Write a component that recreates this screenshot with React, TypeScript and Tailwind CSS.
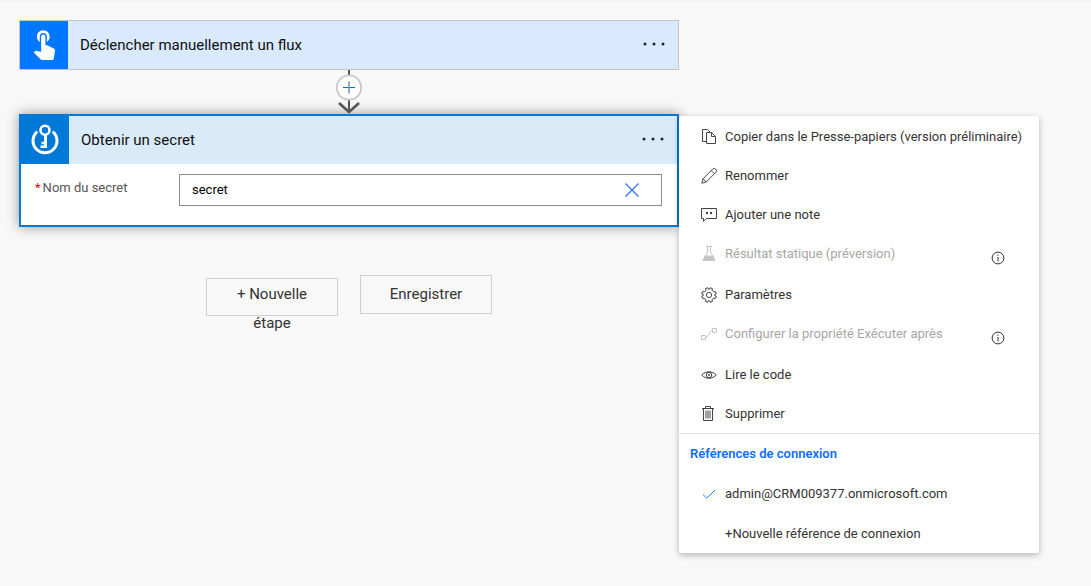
import type { ReactNode } from "react";
import { MdTouchApp } from "react-icons/md";

type IconProps = { children: ReactNode };

function LineIcon({ children }: IconProps) {
  return (
    <svg className="size-4 shrink-0" viewBox="0 0 16 16" fill="none" stroke="currentColor" aria-hidden="true">
      {children}
    </svg>
  );
}

const icons = {
  copy: (
    <LineIcon>
      <path d="M5.500 12.500H1.500V.5H6.500L9 3" />
      <path d="M5.500 3.500H10.500L14.500 7.500V14.500H5.500Z" />
      <path d="M10.500 3.500V7.500H14.500" />
    </LineIcon>
  ),
  pencil: (
    <LineIcon>
      <path d="M.8 15.200L2 10.800L11.600 1.200A2.200 2.200 0 0 1 14.800 4.400L5.200 14ZM2 10.800L5.200 14M10.200 2.600L13.400 5.800" />
    </LineIcon>
  ),
  note: (
    <LineIcon>
      <path d="M.5 1.500H15.500V11.500H5.500L2.500 14.300V11.500H.5Z" />
      <path d="M5 5H7V7H6L5.500 8V7H5ZM9 5H11V7H10L9.500 8V7H9Z" fill="currentColor" stroke="none" />
    </LineIcon>
  ),
  flask: (
    <LineIcon>
      <path d="M5 .5H11M6.500 .5V6L2 14H14L9.500 6V.5" />
      <path d="M4.200 9.500H11.800L14.300 15H1.700Z" fill="currentColor" stroke="none" />
    </LineIcon>
  ),
  gear: (
    <LineIcon>
      <path d="M6.800 .7L7.300 2.200H8.700L9.200 .7L11.600 1.700L10.900 3.100L12.900 5.100L14.300 4.400L15.300 6.800L13.800 7.300V8.700L15.300 9.200L14.300 11.600L12.900 10.900L10.900 12.900L11.600 14.300L9.200 15.300L8.700 13.800H7.300L6.800 15.300L4.400 14.300L5.100 12.900L3.100 10.900L1.700 11.600L.7 9.200L2.200 8.700V7.300L.7 6.800L1.700 4.400L3.100 5.100L5.100 3.100L4.400 1.700Z" />
      <circle cx="8" cy="8" r="2.600" />
    </LineIcon>
  ),
  branch: (
    <LineIcon>
      <path d="M.5 9.500H4.500V13.500H.5ZM11.500 2.500H15.500V6.500H11.500ZM4.500 11.500C8.500 11.500 7.500 4.500 11.500 4.500" />
    </LineIcon>
  ),
  eye: (
    <LineIcon>
      <path d="M.7 8C4.500 3.700 11.500 3.700 15.300 8C11.500 12.300 4.500 12.300 .7 8Z" />
      <circle cx="8" cy="8" r="2.700" />
      <circle cx="8" cy="8" r="1" fill="currentColor" stroke="none" />
    </LineIcon>
  ),
  trash: (
    <LineIcon>
      <path d="M1 2.500H13M4.500 2.500V.5H9.500V2.500M2.500 2.500V14.500H11.500V2.500M5 4.500V12.500M7 4.500V12.500M9 4.500V12.500" />
    </LineIcon>
  ),
  check: (
    <LineIcon>
      <path d="M2 8.500L5.800 12.200L14 4" />
    </LineIcon>
  ),
};

function InfoIcon() {
  return (
    <svg className="size-[14px] shrink-0 text-[#333333]" viewBox="0 0 14 14" fill="none" stroke="currentColor" aria-hidden="true">
      <circle cx="7" cy="7" r="5.900" />
      <path d="M7 6V10.500M7 3.500V4.800" />
    </svg>
  );
}

function KeyVaultIcon() {
  return (
    <svg className="size-8" viewBox="0 0 32 32" fill="none" stroke="white" aria-hidden="true">
      <path d="M8.300 7.600A12 12 0 1 0 23.700 7.600" strokeWidth="3" />
      <circle cx="16" cy="6.200" r="4.500" strokeWidth="2.600" />
      <path d="M16.500 11V24" strokeWidth="3" />
      <path d="M16 19H12.500M16 22.800H11.500" strokeWidth="2.400" />
    </svg>
  );
}

function MoreButton() {
  return (
    <button type="button" aria-label="Plus d'options" className="flex h-6 w-8 items-center justify-center pb-0.5">
      <svg className="h-1 w-[22px]" viewBox="0 0 22 4" fill="#222222" aria-hidden="true">
        <circle cx="2" cy="2" r="1.500" />
        <circle cx="11" cy="2" r="1.500" />
        <circle cx="20" cy="2" r="1.500" />
      </svg>
    </button>
  );
}

function Connector() {
  return (
    <div className="flex h-11 justify-center">
      <button type="button" aria-label="Insérer une nouvelle étape">
        <svg className="h-11 w-7" viewBox="0 0 28 44" fill="none" aria-hidden="true">
          <path d="M14 0V42" stroke="#555555" strokeWidth="2" />
          <path d="M4 33L14 42L24 33" stroke="#555555" strokeWidth="2.500" />
          <circle cx="14" cy="17.500" r="12.200" fill="white" stroke="#c8c8c8" strokeWidth="1.800" />
          <path d="M8 17.500H20" stroke="#0f6cbd" />
          <path d="M14 11.500V23.500" stroke="#5a8fdc" strokeWidth="1.500" />
        </svg>
      </button>
    </div>
  );
}

type MenuEntry = { label: string; icon: ReactNode; disabled?: boolean };

const menuEntries: MenuEntry[] = [
  { label: "Copier dans le Presse-papiers (version préliminaire)", icon: icons.copy },
  { label: "Renommer", icon: icons.pencil },
  { label: "Ajouter une note", icon: icons.note },
  { label: "Résultat statique (préversion)", icon: icons.flask, disabled: true },
  { label: "Paramètres", icon: icons.gear },
  { label: "Configurer la propriété Exécuter après", icon: icons.branch, disabled: true },
  { label: "Lire le code", icon: icons.eye },
  { label: "Supprimer", icon: icons.trash },
];

function MenuItem({ label, icon, disabled }: MenuEntry) {
  if (disabled) {
    return (
      <li className="flex h-[41px] items-start justify-between pr-[34px] pl-[22px] text-[#a6a6a6]">
        <button type="button" disabled className="flex h-[39px] items-center gap-2 whitespace-nowrap">
          <span className="text-[#c4c4c4]">{icon}</span>
          {label}
        </button>
        <button type="button" aria-label={`Informations : ${label}`} className="pt-[17px]">
          <InfoIcon />
        </button>
      </li>
    );
  }
  return (
    <li>
      <button type="button" className="flex h-[39px] w-full items-center gap-2 pl-[22px] whitespace-nowrap">
        <span className="text-[#444444]">{icon}</span>
        {label}
      </button>
    </li>
  );
}

function ActionMenu() {
  return (
    <aside className="relative mt-24 w-[360px] shrink-0 rounded-xs bg-white pt-px text-[13px] text-[#333333] shadow-[0_2px_6px_rgba(0,0,0,0.28)]">
      <ul>
        {menuEntries.map((entry) => (
          <MenuItem key={entry.label} {...entry} />
        ))}
      </ul>
      <div className="border-t border-[#e1e1e1]">
        <h2 className="flex h-10 items-center pl-[11px] font-semibold text-[#106efb]">Références de connexion</h2>
        <button type="button" className="flex h-10 w-full items-center gap-2 pl-[22px]">
          <span className="text-[#1a86e0]">{icons.check}</span>
          admin@CRM009377.onmicrosoft.com
        </button>
        <button type="button" className="flex h-[39px] w-full items-center pl-[46px]">
          +Nouvelle référence de connexion
        </button>
      </div>
    </aside>
  );
}

function TriggerCard() {
  return (
    <section className="flex h-[50px] items-center border border-[#c4c4c4] bg-[#d9eaff] pr-2">
      <div className="flex size-12 items-center justify-center bg-[#0077ff] pb-1">
        <MdTouchApp className="size-[34px] text-white" />
      </div>
      <h2 className="flex-1 pl-3 text-[15px]">Déclencher manuellement un flux</h2>
      <MoreButton />
    </section>
  );
}

function SecretCard() {
  return (
    <section className="border-2 border-[#0078d7] bg-white shadow-[0_0_12px_rgba(0,0,0,0.4)]">
      <header className="flex h-12 items-center bg-[#d9eaf8] pr-2">
        <div className="flex size-12 items-center justify-center bg-[#0078d7]">
          <KeyVaultIcon />
        </div>
        <h2 className="flex-1 pl-3 text-[15px]">Obtenir un secret</h2>
        <MoreButton />
      </header>
      <div className="flex items-start pt-[10px] pr-[15px] pb-[19px] pl-[14px] text-[13px]">
        <label htmlFor="secret-name" className="flex w-36 gap-0.5 pt-1 leading-5 text-[#555555]">
          <span className="text-[#e00b1c]">*</span>
          <span>Nom du secret</span>
        </label>
        <div className="flex h-8 min-w-0 flex-1 items-center border border-[#8a8a8a] pr-[21px] pl-3">
          <input id="secret-name" defaultValue="secret" className="min-w-0 flex-1 text-black outline-none" />
          <button type="button" aria-label="Effacer">
            <svg className="size-4" viewBox="0 0 16 16" stroke="#2f6ff0" strokeWidth="1.200" aria-hidden="true">
              <path d="M1.500 1.500L14.500 14.500M14.500 1.500L1.500 14.500" />
            </svg>
          </button>
        </div>
      </div>
    </section>
  );
}

export default function App() {
  return (
    <div className="min-h-screen border-t-2 border-[#f3f3f3] bg-[#f8f8f8] font-['Roboto','Open_Sans',sans-serif] text-[#111111]">
      <main className="flex items-start pt-[18px] pr-[52px] pl-[19px]">
        <div className="min-w-0 flex-1">
          <TriggerCard />
          <Connector />
          <SecretCard />
          <div className="mt-12 flex items-start justify-center gap-[22px] text-[15px] leading-[29px] text-[#333333]">
            <button type="button" className="mt-[3px] flex h-[38px] w-[132px] items-start justify-center border border-[#d0d0d0] px-5 pt-px">
              + Nouvelle étape
            </button>
            <button type="button" className="flex h-[39px] w-[132px] items-center justify-center border border-[#d0d0d0]">
              Enregistrer
            </button>
          </div>
        </div>
        <ActionMenu />
      </main>
    </div>
  );
}
